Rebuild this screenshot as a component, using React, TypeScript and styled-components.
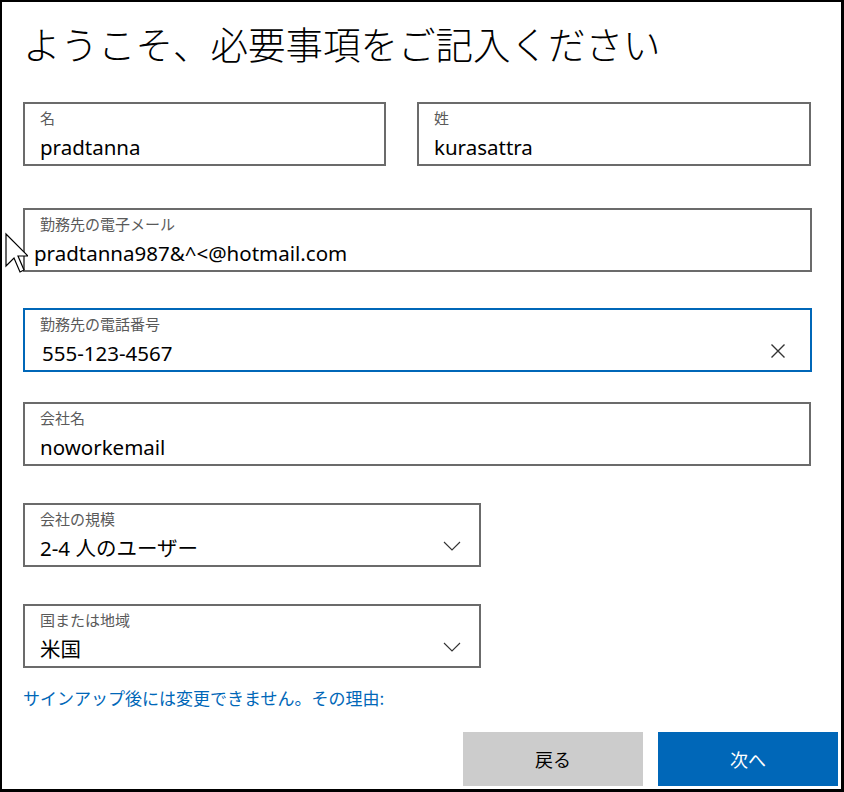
import styled, { createGlobalStyle } from "styled-components";

const GlobalStyle = createGlobalStyle`
  html, body {
    margin: 0;
    padding: 0;
    background: #ffffff;
  }
  * {
    box-sizing: border-box;
  }
`;

const latin = `"Noto Sans", "Noto Sans CJK JP", sans-serif`;
const cjk = `"Noto Sans CJK JP", "Noto Sans", sans-serif`;

const Frame = styled.div`
  position: relative;
  width: 844px;
  height: 792px;
  border: 2px solid #000000;
  border-right-width: 3px;
  border-bottom-width: 3px;
  background: #ffffff;
  padding: 0 3px 0 21px;
  display: flex;
  flex-direction: column;
  font-family: ${latin};
  color: #000000;
`;

const Title = styled.h1`
  margin: 14px 0 0 0;
  font-family: ${cjk};
  font-weight: 300;
  font-size: 37.5px;
  line-height: 54px;
  color: #000000;
`;

const NameRow = styled.div`
  display: grid;
  grid-template-columns: 363px 394px;
  column-gap: 31px;
  margin-top: 32px;
`;

const Field = styled.div<{ $width?: number; $top?: number; $focused?: boolean }>`
  position: relative;
  width: ${(p) => (p.$width ? `${p.$width}px` : "789px")};
  height: 64px;
  flex-shrink: 0;
  margin-top: ${(p) => p.$top ?? 0}px;
  border: 2px solid ${(p) => (p.$focused ? "#0067b8" : "#6b6b6b")};
  padding: 4px 15px 0 15px;
  display: flex;
  flex-direction: column;

  ${NameRow} & {
    width: 100%;
  }
`;

const Label = styled.div`
  font-family: ${cjk};
  font-size: 15px;
  line-height: 20px;
  color: #5a5a5a;
`;

const Value = styled.div<{ $offset?: number }>`
  font-size: 20.5px;
  line-height: 30px;
  margin-top: 4px;
  margin-left: ${(p) => p.$offset ?? 0}px;
  color: #000000;
  white-space: nowrap;
`;

const Trailing = styled.span<{ $right: number; $top: number }>`
  position: absolute;
  right: ${(p) => p.$right}px;
  top: ${(p) => p.$top}px;
  display: flex;
  line-height: 0;
`;

const InfoLink = styled.a`
  margin-top: 18px;
  font-family: ${cjk};
  font-size: 17px;
  line-height: 24px;
  color: #0067b8;
  text-decoration: none;
  cursor: pointer;
`;

const ButtonRow = styled.div`
  display: flex;
  justify-content: flex-end;
  gap: 15px;
  margin-top: 22px;
`;

const Button = styled.button<{ $primary?: boolean }>`
  width: 180px;
  height: 54px;
  border: none;
  padding: 0;
  font-family: ${cjk};
  font-size: 18px;
  background: ${(p) => (p.$primary ? "#0067b8" : "#cccccc")};
  color: ${(p) => (p.$primary ? "#ffffff" : "#000000")};
  cursor: pointer;
`;

const Pointer = styled.svg`
  position: absolute;
  left: 2px;
  top: 230px;
`;

const Chevron = () => (
  <svg width="18" height="10" viewBox="0 0 18 10">
    <path d="M1 1 L9 9 L17 1" fill="none" stroke="#333333" strokeWidth="1.1" />
  </svg>
);

const ClearIcon = () => (
  <svg width="16" height="16" viewBox="0 0 16 16">
    <path d="M1.5 1.5 L14.5 14.5 M14.5 1.5 L1.5 14.5" fill="none" stroke="#333333" strokeWidth="1.4" />
  </svg>
);

export default function App() {
  return (
    <>
      <GlobalStyle />
      <Frame>
        <Title>ようこそ、必要事項をご記入ください</Title>

        <NameRow>
          <Field>
            <Label>名</Label>
            <Value>pradtanna</Value>
          </Field>
          <Field>
            <Label>姓</Label>
            <Value>kurasattra</Value>
          </Field>
        </NameRow>

        <Field $top={42}>
          <Label>勤務先の電子メール</Label>
          <Value $offset={-6}>pradtanna987&amp;^&lt;@hotmail.com</Value>
        </Field>

        <Field $top={36} $focused>
          <Label>勤務先の電話番号</Label>
          <Value $offset={2}>555-123-4567</Value>
          <Trailing $right={24} $top={33}>
            <ClearIcon />
          </Trailing>
        </Field>

        <Field $top={30} $width={788}>
          <Label>会社名</Label>
          <Value>noworkemail</Value>
        </Field>

        <Field $top={37} $width={458}>
          <Label>会社の規模</Label>
          <Value>2-4 人のユーザー</Value>
          <Trailing $right={18} $top={36}>
            <Chevron />
          </Trailing>
        </Field>

        <Field $top={37} $width={458}>
          <Label>国または地域</Label>
          <Value>米国</Value>
          <Trailing $right={18} $top={36}>
            <Chevron />
          </Trailing>
        </Field>

        <InfoLink>サインアップ後には変更できません。その理由:</InfoLink>

        <ButtonRow>
          <Button>戻る</Button>
          <Button $primary>次へ</Button>
        </ButtonRow>

        <Pointer width="24" height="42" viewBox="0 0 12 21">
          <path
            d="M1 1 L1 17 L5 13 L8 20 L10 19 L7 12 L12 12 Z"
            fill="#ffffff"
            stroke="#000000"
            strokeWidth="0.6"
            strokeLinejoin="miter"
          />
        </Pointer>
      </Frame>
    </>
  );
}
